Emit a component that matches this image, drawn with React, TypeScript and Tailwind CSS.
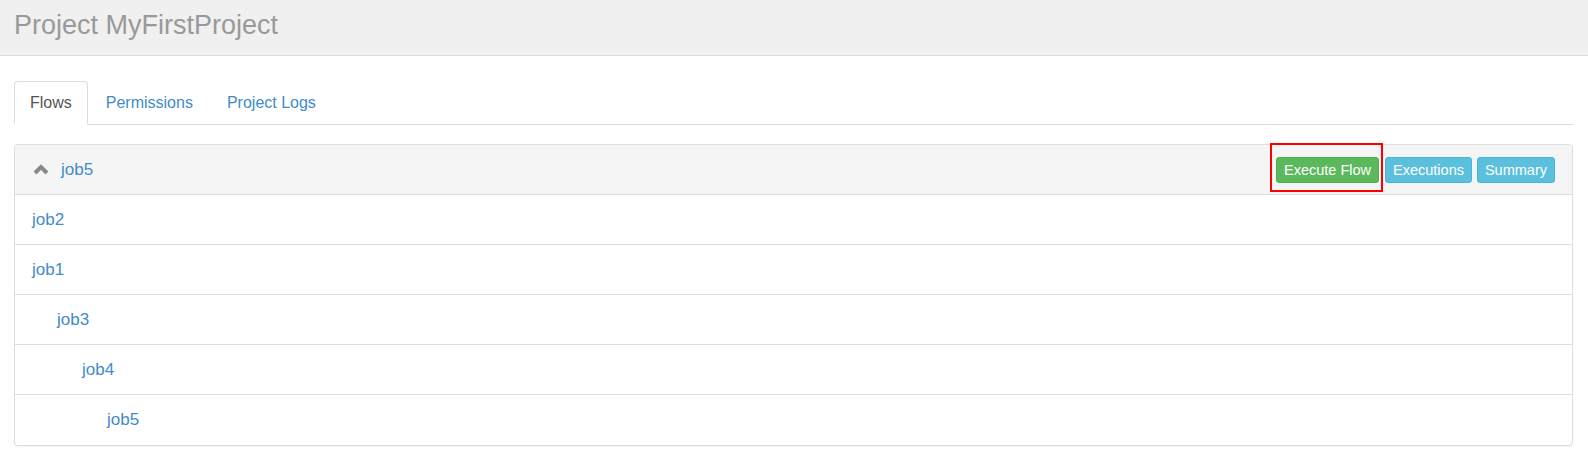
import React from "react";

const font = { fontFamily: '"Liberation Sans", Arial, Helvetica, sans-serif' };

function Chevron() {
  return (
    <svg width="16" height="11" viewBox="0 0 16 11" className="shrink-0">
      <polyline points="2,9 8,3 14,9" fill="none" stroke="#888" strokeWidth="4" strokeLinecap="butt" strokeLinejoin="miter" />
    </svg>
  );
}

const rows = [
  { name: "job2", indent: 0 },
  { name: "job1", indent: 0 },
  { name: "job3", indent: 1 },
  { name: "job4", indent: 2 },
  { name: "job5", indent: 3 },
];

const indentClass = ["pl-[17px]", "pl-[42px]", "pl-[67px]", "pl-[92px]"];

export default function App() {
  return (
    <div className="w-[1588px] h-[456px] bg-white overflow-hidden" style={font}>
      <div className="h-[56px] bg-[#f0f0f0] border-b border-[#dcdcdc] pl-[14px] pt-[10px]">
        <h1 className="text-[27px] leading-[31px] text-[#999999] font-normal">Project MyFirstProject</h1>
      </div>
      <div className="pl-[14px] pr-[15px] pt-[25px]">
        <ul className="flex border-b border-[#dddddd] text-[16px] leading-[22px]">
          <li className="mr-[2px] -mb-px">
            <span className="block border border-[#dddddd] border-b-white bg-white rounded-t-[4px] px-[15px] pt-[10px] pb-[10px] text-[#555555]">
              Flows
            </span>
          </li>
          <li className="mr-[2px] -mb-px">
            <span className="block border border-transparent px-[15px] pt-[10px] pb-[10px] text-[#428bca]">Permissions</span>
          </li>
          <li className="mr-[2px] -mb-px">
            <span className="block border border-transparent px-[15px] pt-[10px] pb-[10px] text-[#428bca]">Project Logs</span>
          </li>
        </ul>
        <div className="mt-[19px] border border-[#dddddd] rounded-[4px] shadow-[0_1px_1px_rgba(0,0,0,0.06)] bg-white">
          <div className="h-[50px] bg-[#f5f5f5] border-b border-[#dddddd] rounded-t-[4px] flex items-center pl-[18px] pr-[17px]">
            <Chevron />
            <span className="ml-[12px] text-[17px] text-[#428bca]">job5</span>
            <div className="ml-auto flex items-center text-[14.5px] leading-[18px] text-white">
              <span className="relative">
                <span className="block bg-[#5cb85c] border border-[#4cae4c] rounded-[3px] px-[7px] py-[3px]">Execute Flow</span>
                <span className="absolute -left-[6px] -right-[4px] -top-[14px] -bottom-[9px] border-2 border-[#ff0000] pointer-events-none" />
              </span>
              <span className="ml-[6px] block bg-[#5bc0de] border border-[#46b8da] rounded-[3px] px-[7px] py-[3px]">Executions</span>
              <span className="ml-[5px] block bg-[#5bc0de] border border-[#46b8da] rounded-[3px] px-[7px] py-[3px]">Summary</span>
            </div>
          </div>
          {rows.map((r, i) => (
            <div
              key={i}
              className={`h-[50px] flex items-center text-[17px] text-[#428bca] ${indentClass[r.indent]} ${i < rows.length - 1 ? "border-b border-[#dddddd]" : ""}`}
            >
              {r.name}
            </div>
          ))}
        </div>
      </div>
    </div>
  );
}
